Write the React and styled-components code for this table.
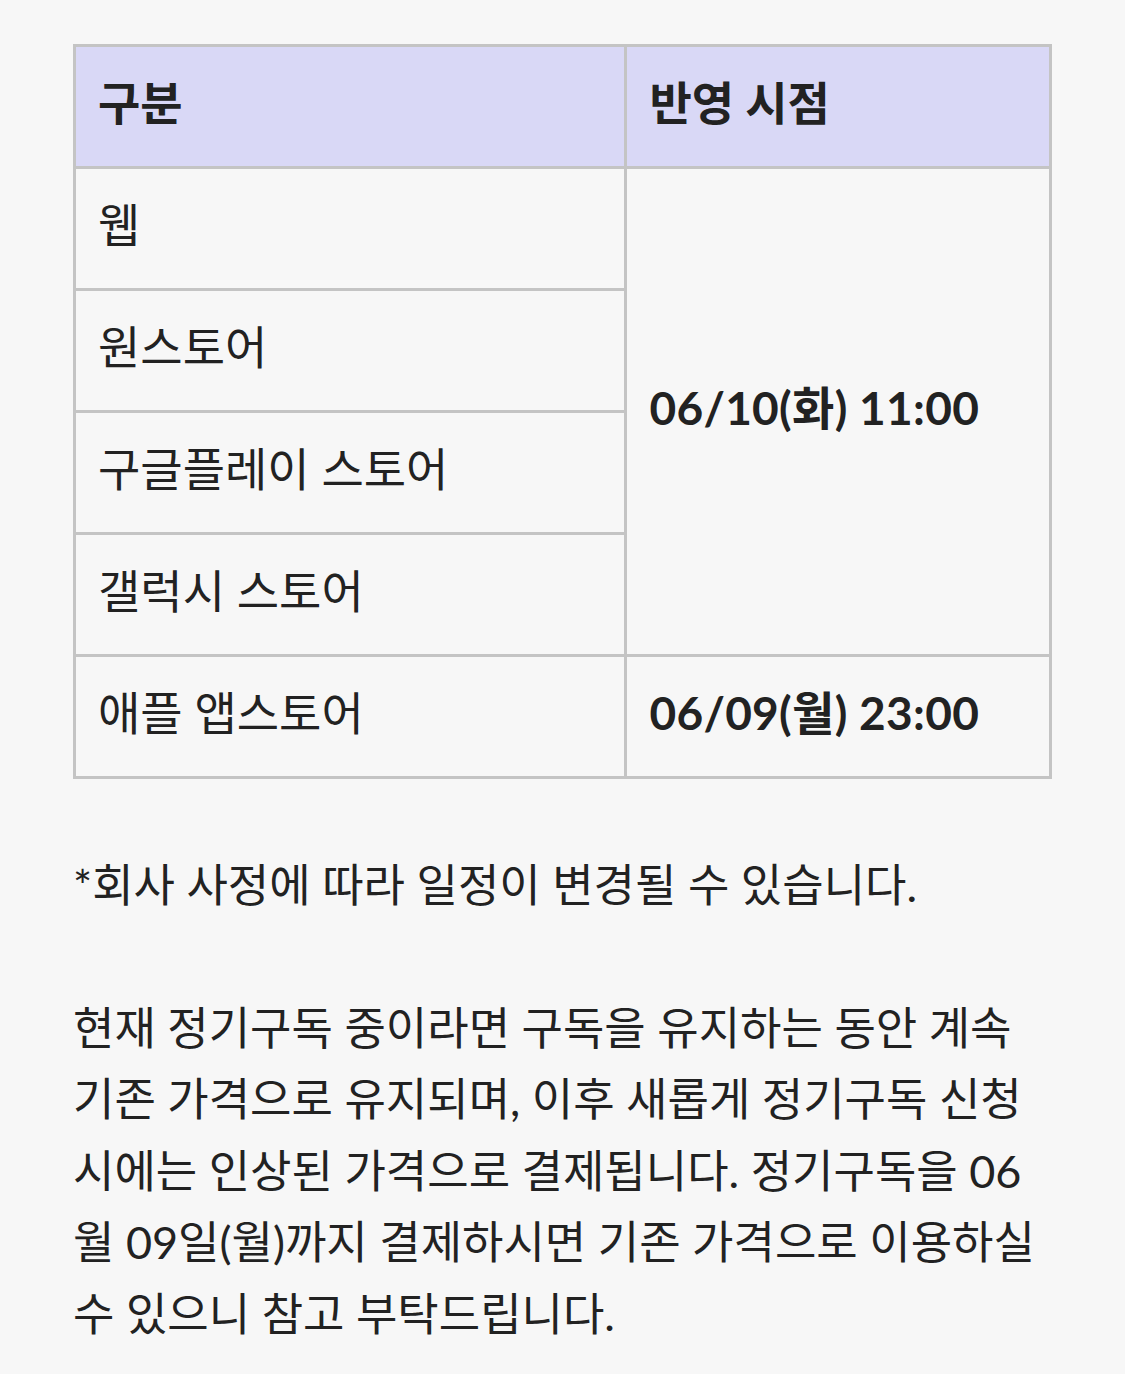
import React from "react";
import styled, { createGlobalStyle } from "styled-components";

const GlobalStyle = createGlobalStyle`
  html, body {
    margin: 0;
    padding: 0;
    background: #f7f7f7;
  }
  body {
    font-family: Lato, "Noto Sans CJK KR", sans-serif;
    color: #222222;
  }
`;

const Page = styled.div`
  padding: 44px 73px 24px;
  font-size: 46px;
  line-height: 71.5px;
`;

const Table = styled.table`
  width: 100%;
  border-collapse: collapse;
  table-layout: fixed;
  border: 3px solid #c4c4c4;
`;

const HeadCell = styled.th`
  box-sizing: border-box;
  background: #d9d8f6;
  border: 3px solid #c4c4c4;
  text-align: left;
  font-weight: 700;
  padding: 20px 22px 27.5px;
  width: ${(p) => p.$width || "auto"};
`;

const Cell = styled.td`
  border: 3px solid #c4c4c4;
  padding: 20px 22px 27.5px;
  vertical-align: middle;
  font-weight: ${(p) => (p.$bold ? 700 : 400)};
  letter-spacing: ${(p) => (p.$bold ? "0.3px" : "0")};
`;

const Text = styled.p`
  margin: 71px 0 0;
  font-size: 45px;
`;

const rows = ["웹", "원스토어", "구글플레이 스토어", "갤럭시 스토어"];

export default function App() {
  return (
    <>
      <GlobalStyle />
      <Page>
        <Table>
          <thead>
            <tr>
              <HeadCell $width="56.5%">구분</HeadCell>
              <HeadCell>반영 시점</HeadCell>
            </tr>
          </thead>
          <tbody>
            {rows.map((name, i) => (
              <tr key={name}>
                <Cell>{name}</Cell>
                {i === 0 && (
                  <Cell $bold rowSpan={4}>
                    06/10(화) 11:00
                  </Cell>
                )}
              </tr>
            ))}
            <tr>
              <Cell>애플 앱스토어</Cell>
              <Cell $bold>06/09(월) 23:00</Cell>
            </tr>
          </tbody>
        </Table>
        <Text>*회사 사정에 따라 일정이 변경될 수 있습니다.</Text>
        <Text>
          현재 정기구독 중이라면 구독을 유지하는 동안 계속 기존 가격으로
          유지되며, 이후 새롭게 정기구독 신청 시에는 인상된 가격으로
          결제됩니다. 정기구독을 06월 09일(월)까지 결제하시면 기존 가격으로
          이용하실 수 있으니 참고 부탁드립니다.
        </Text>
      </Page>
    </>
  );
}
